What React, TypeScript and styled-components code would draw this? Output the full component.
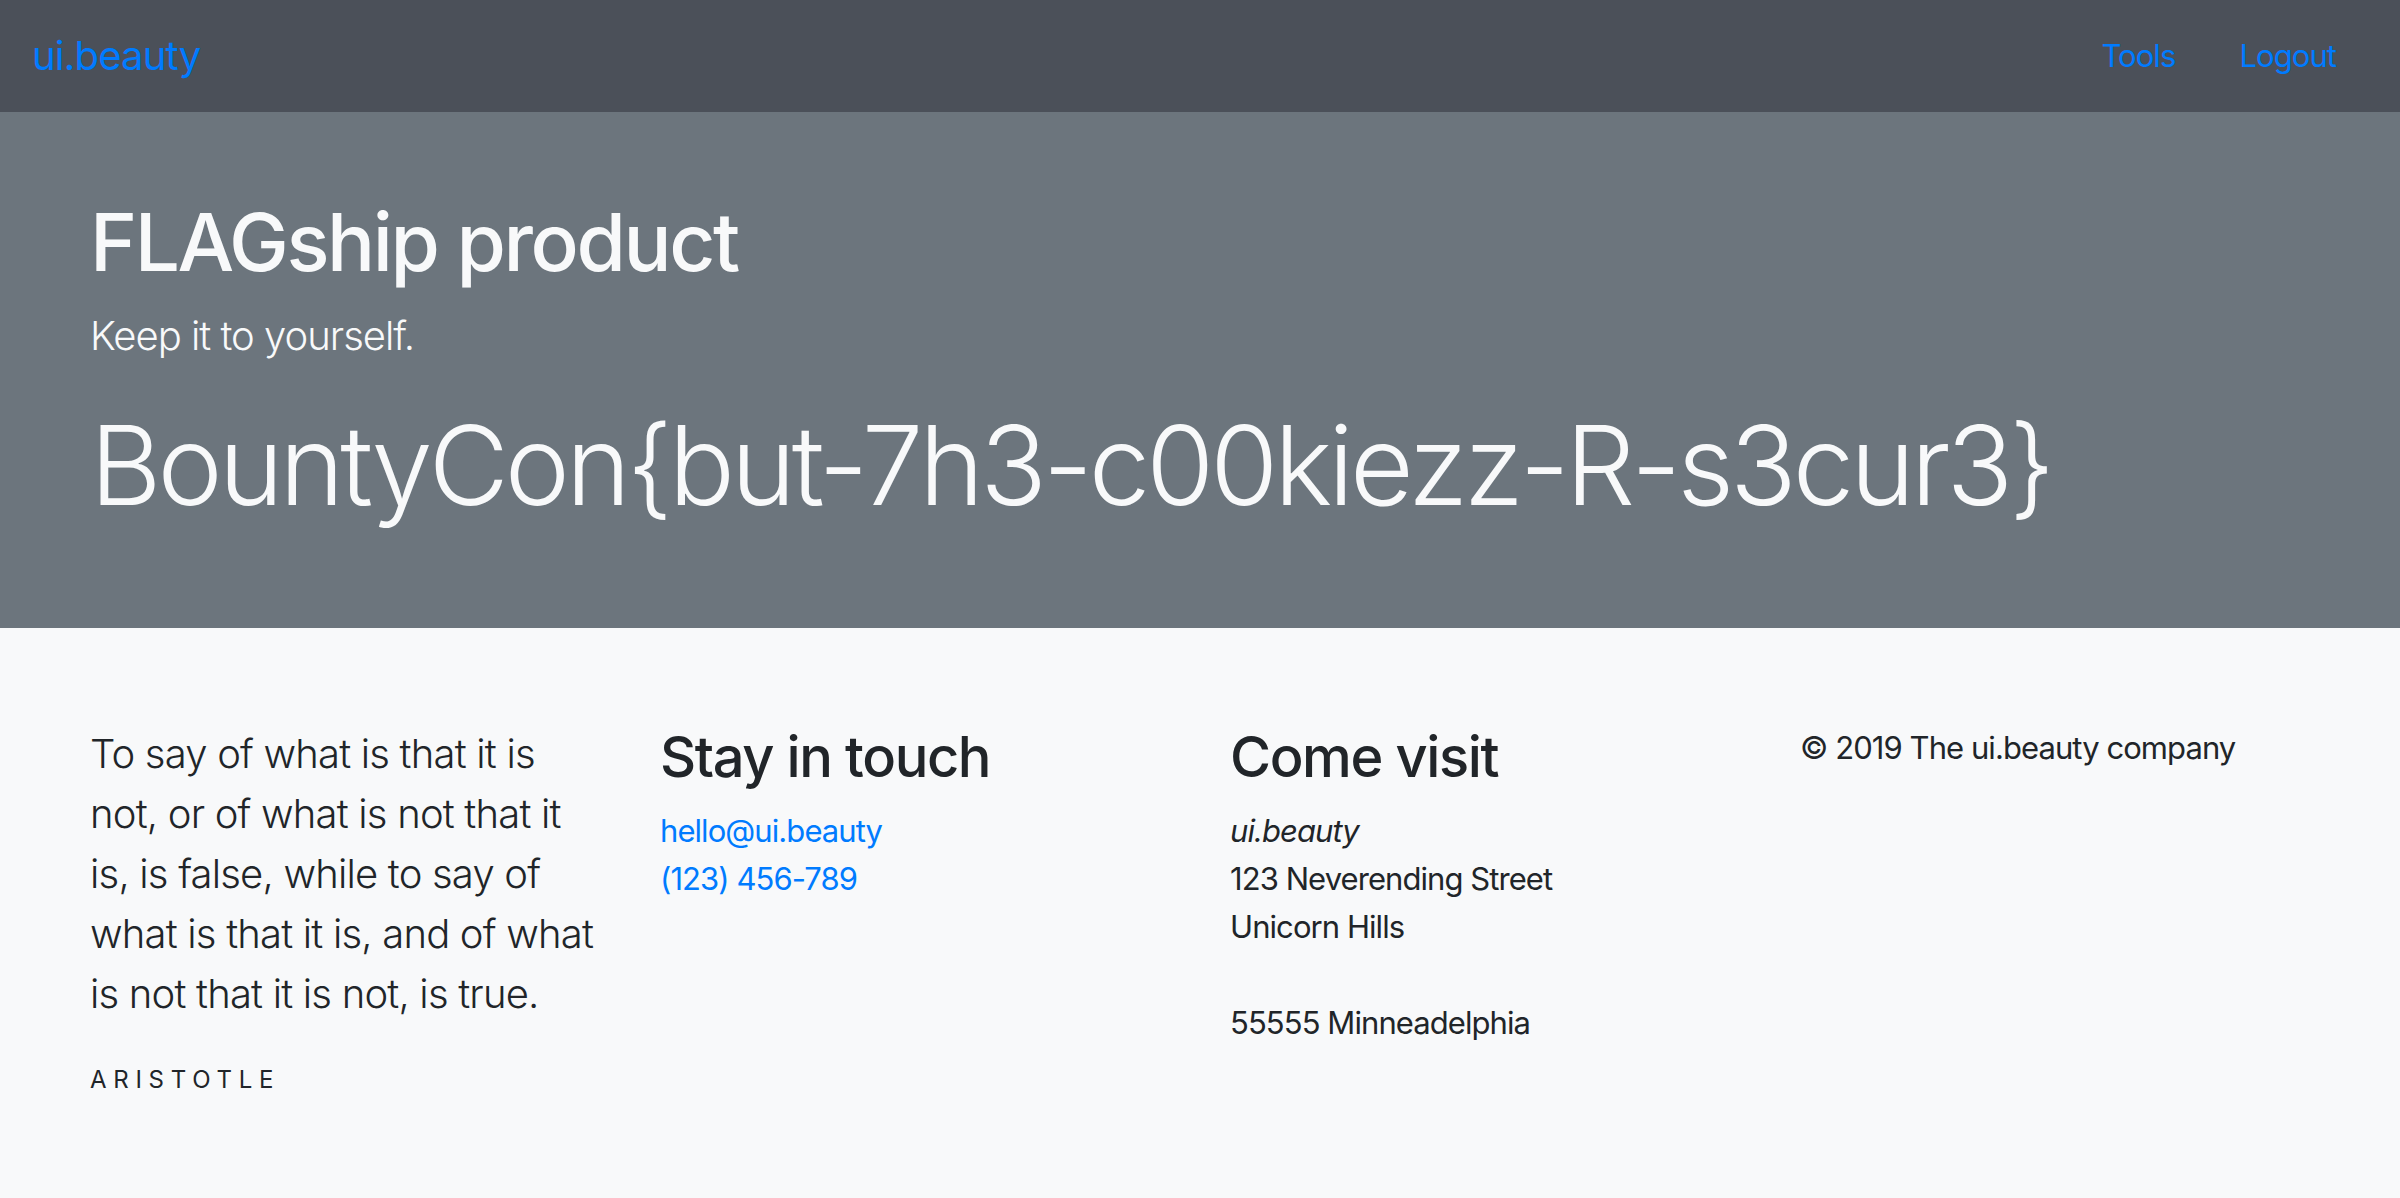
import React from "react";
import styled, { createGlobalStyle } from "styled-components";

const GlobalStyle = createGlobalStyle`
  *, *::before, *::after { box-sizing: border-box; }
  html, body { margin: 0; padding: 0; }
  body {
    font-family: Inter, "Noto Sans", "Liberation Sans", sans-serif;
    font-size: 31px;
    line-height: 48px;
    color: #212529;
    background: #f8f9fa;
  }
`;

const Page = styled.div`
  min-height: 100vh;
  display: flex;
  flex-direction: column;
  background: #f8f9fa;
`;

const Navbar = styled.nav`
  display: flex;
  align-items: center;
  justify-content: space-between;
  height: 112px;
  padding: 0 32px;
  background: #4b5059;
`;

const Brand = styled.a`
  font-size: 40px;
  line-height: 60px;
  color: #007bff;
  text-decoration: none;
  letter-spacing: -0.02em;
`;

const NavList = styled.ul`
  display: flex;
  list-style: none;
  margin: 0;
  padding: 0;
`;

const NavLink = styled.a`
  display: block;
  padding: 0 32px;
  font-size: 31px;
  line-height: 48px;
  color: #007bff;
  text-decoration: none;
  letter-spacing: -0.03em;
`;

const Hero = styled.header`
  background: #6c757d;
  color: #f8f9fa;
  padding: 82px 0 96px;
`;

const Container = styled.div`
  max-width: 2280px;
  width: 100%;
  margin: 0 auto;
  padding: 0 30px;
`;

const Title = styled.h1`
  margin: 0 0 16px;
  font-size: 80px;
  font-weight: 500;
  line-height: 1.2;
  letter-spacing: -0.03em;
`;

const Lead = styled.p`
  margin: 0 0 32px;
  font-size: 40px;
  font-weight: 300;
  line-height: 1.5;
  letter-spacing: -0.025em;
`;

const Display = styled.h1`
  margin: 0;
  font-size: 110px;
  font-weight: 300;
  line-height: 134px;
  letter-spacing: -0.036em;
`;

const Footer = styled.footer`
  flex: 1;
  padding: 96px 0;
  background: #f8f9fa;
`;

const Columns = styled.div`
  display: grid;
  grid-template-columns: repeat(4, 1fr);
  column-gap: 60px;
  align-items: start;
`;

const Quote = styled.blockquote`
  margin: 0;
`;

const QuoteText = styled.p`
  margin: 0 0 38px;
  font-size: 40px;
  font-weight: 300;
  line-height: 60px;
  letter-spacing: -0.02em;
`;

const Author = styled.div`
  font-size: 24px;
  line-height: 36px;
  text-transform: uppercase;
  letter-spacing: 0.28em;
`;

const Heading = styled.h3`
  margin: 0 0 16px;
  font-size: 56px;
  font-weight: 500;
  line-height: 1.2;
  letter-spacing: -0.025em;
`;

const LinkList = styled.ul`
  list-style: none;
  margin: 0;
  padding: 0;
`;

const FooterLink = styled.a`
  color: #007bff;
  text-decoration: none;
  letter-spacing: -0.03em;
`;

const Address = styled.address`
  margin: 0;
  font-style: normal;
  letter-spacing: -0.03em;
`;

const Copy = styled.p`
  margin: 0;
  letter-spacing: -0.03em;
`;

export default function App() {
  return (
    <Page>
      <GlobalStyle />
      <Navbar>
        <Brand href="#">ui.beauty</Brand>
        <NavList>
          <li><NavLink href="#">Tools</NavLink></li>
          <li><NavLink href="#">Logout</NavLink></li>
        </NavList>
      </Navbar>
      <Hero>
        <Container>
          <Title>FLAGship product</Title>
          <Lead>Keep it to yourself.</Lead>
          <Display>BountyCon{"{"}but-7h3-c00kiezz-R-s3cur3{"}"}</Display>
        </Container>
      </Hero>
      <Footer>
        <Container>
          <Columns>
            <Quote>
              <QuoteText>
                To say of what is that it is not, or of what is not that it is, is false, while to say of what is that it is, and of what is not that it is not, is true.
              </QuoteText>
              <Author>Aristotle</Author>
            </Quote>
            <div>
              <Heading>Stay in touch</Heading>
              <LinkList>
                <li><FooterLink href="#">hello@ui.beauty</FooterLink></li>
                <li><FooterLink href="#">(123) 456-789</FooterLink></li>
              </LinkList>
            </div>
            <div>
              <Heading>Come visit</Heading>
              <Address>
                <em>ui.beauty</em>
                <br />
                123 Neverending Street
                <br />
                Unicorn Hills
                <br />
                <br />
                55555 Minneadelphia
              </Address>
            </div>
            <div>
              <Copy>© 2019 The ui.beauty company</Copy>
            </div>
          </Columns>
        </Container>
      </Footer>
    </Page>
  );
}
